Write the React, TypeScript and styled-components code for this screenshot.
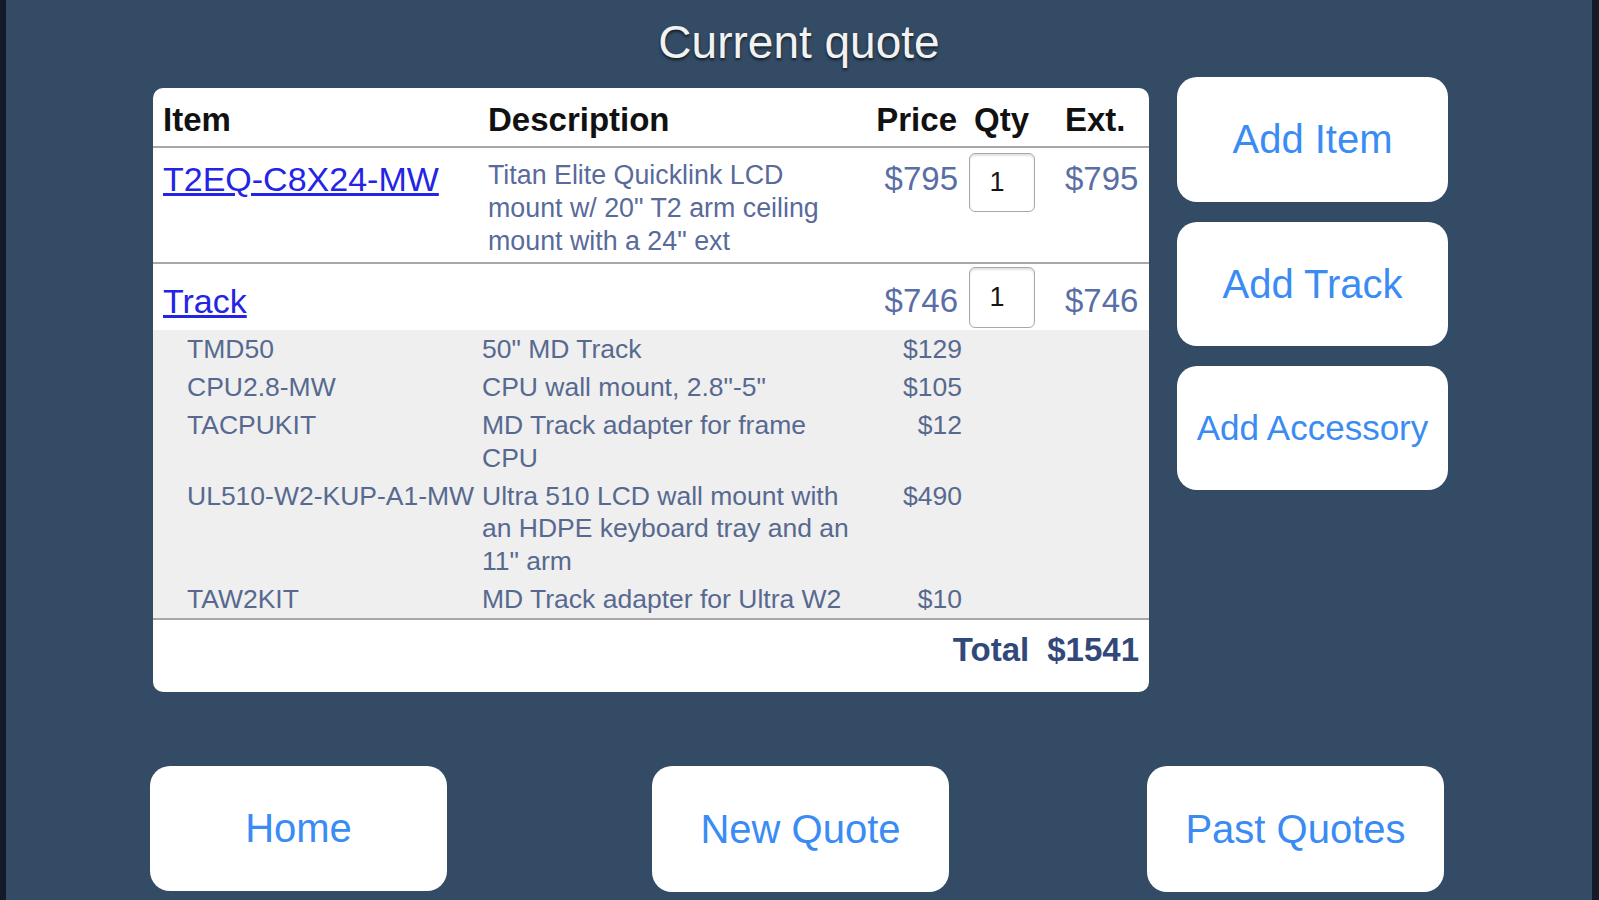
import React from "react";
import styled, { createGlobalStyle } from "styled-components";

const GlobalStyle = createGlobalStyle`
  html, body {
    margin: 0;
    padding: 0;
    background: #344b65;
  }
  * { box-sizing: border-box; }
`;

const Frame = styled.div`
  width: 100%;
  height: 900px;
  background: #344b65;
  border-left: 6px solid #121b27;
  border-right: 7px solid #121b27;
  display: flex;
  flex-direction: column;
  font-family: "Liberation Sans", Arial, sans-serif;
  overflow: hidden;
`;

const Title = styled.h1`
  margin: 15px 0 0;
  font-size: 46px;
  line-height: 54px;
  font-weight: 400;
  color: #f2f2f2;
  text-align: center;
  text-shadow: 0 2px 3px rgba(0, 0, 0, 0.65);
`;

const Main = styled.div`
  display: flex;
  align-items: flex-start;
  gap: 28px;
  margin-top: 8px;
  padding-left: 147px;
`;

const Card = styled.div`
  width: 996px;
  margin-top: 11px;
  background: #ffffff;
  border-radius: 10px;
  overflow: hidden;
`;

const cols = "325px 355px 116px 85px 1fr";

const HeaderRow = styled.div`
  display: grid;
  grid-template-columns: ${cols};
  padding: 0 10px;
  height: 60px;
  border-bottom: 2px solid #a8a8a8;
`;

const HeadCell = styled.div<{ $align?: "left" | "right" | "center"; $pl?: number }>`
  padding-top: 12px;
  font-size: 33px;
  line-height: 40px;
  font-weight: 700;
  color: #111111;
  text-align: ${(p) => p.$align || "left"};
  padding-left: ${(p) => p.$pl || 0}px;
  padding-right: ${(p) => (p.$align === "right" ? 2 : 0)}px;
  white-space: nowrap;
`;

const ItemRow = styled.div<{ $h: number; $line?: boolean }>`
  display: grid;
  grid-template-columns: ${cols};
  align-items: start;
  padding: 0 10px;
  height: ${(p) => p.$h}px;
  border-bottom: ${(p) => (p.$line ? "2px solid #a8a8a8" : "none")};
`;

const ItemLink = styled.a<{ $pt: number }>`
  display: block;
  padding-top: ${(p) => p.$pt}px;
  font-size: 34px;
  line-height: 40px;
  color: #2424e4;
  text-decoration: underline;
  text-underline-offset: 2px;
  white-space: nowrap;
`;

const Desc = styled.div`
  padding-top: 11px;
  font-size: 26.8px;
  line-height: 33px;
  color: #596a9b;
`;

const Money = styled.div<{ $pt: number; $align?: "left" | "right"; $pl?: number }>`
  padding-top: ${(p) => p.$pt}px;
  padding-left: ${(p) => p.$pl || 0}px;
  padding-right: ${(p) => (p.$align === "right" ? 1 : 0)}px;
  font-size: 33px;
  line-height: 40px;
  color: #5a6ea6;
  text-align: ${(p) => p.$align || "left"};
  white-space: nowrap;
`;

const QtyCell = styled.div`
  display: flex;
  justify-content: center;
`;

const QtyBox = styled.input<{ $mt: number; $h: number }>`
  margin-top: ${(p) => p.$mt}px;
  width: 66px;
  height: ${(p) => p.$h}px;
  border: 1.5px solid #a9a9a9;
  border-radius: 6px;
  background: #ffffff;
  padding: 0 0 0 20px;
  font-family: "Liberation Sans", Arial, sans-serif;
  font-size: 27px;
  color: #151515;
  box-shadow: inset 0 2px 2px rgba(0, 0, 0, 0.12);
  outline: none;
`;

const SubList = styled.div`
  background: #efefef;
  padding: 0 0 0 34px;
  border-bottom: 2px solid #a8a8a8;
`;

const SubRow = styled.div`
  display: grid;
  grid-template-columns: 295px 380px 100px;
  align-items: start;
  padding: 3px 0 2.5px;
  font-size: 26.5px;
  line-height: 32.5px;
  color: #57698f;
`;

const SubCell = styled.div<{ $align?: "left" | "right" }>`
  text-align: ${(p) => p.$align || "left"};
  white-space: ${(p) => (p.$align === "right" ? "nowrap" : "normal")};
`;

const SubCode = styled.div`
  white-space: nowrap;
`;

const Footer = styled.div`
  height: 72px;
  display: flex;
  justify-content: flex-end;
  gap: 18px;
  padding: 10px 10px 0 0;
  font-size: 33px;
  line-height: 40px;
  font-weight: 700;
  color: #33487a;
`;

const Side = styled.div`
  display: flex;
  flex-direction: column;
  gap: 20px;
  width: 271px;
`;

const ActionButton = styled.button<{ $w?: number; $size?: number }>`
  width: ${(p) => p.$w || 271}px;
  height: 124px;
  border: none;
  border-radius: 20px;
  background: #ffffff;
  color: #3a8cf4;
  font-family: "Liberation Sans", Arial, sans-serif;
  font-size: ${(p) => p.$size || 40}px;
  font-weight: 400;
  padding: 0;
  cursor: pointer;
  white-space: nowrap;
`;

const Bottom = styled.div`
  margin-top: auto;
  display: grid;
  grid-template-columns: 297px 1fr 297px 1fr 297px;
  padding: 0 148px 8px 144px;
`;

const Spacer = styled.div<{ $w: number }>`
  min-width: ${(p) => p.$w}px;
`;

type Sub = { code: string; desc: string; price: string };

const subs: Sub[] = [
  { code: "TMD50", desc: "50\" MD Track", price: "$129" },
  { code: "CPU2.8-MW", desc: "CPU wall mount, 2.8\"-5\"", price: "$105" },
  { code: "TACPUKIT", desc: "MD Track adapter for frame CPU", price: "$12" },
  {
    code: "UL510-W2-KUP-A1-MW",
    desc: "Ultra 510 LCD wall mount with an HDPE keyboard tray and an 11\" arm",
    price: "$490",
  },
  { code: "TAW2KIT", desc: "MD Track adapter for Ultra W2", price: "$10" },
];

export default function App() {
  return (
    <>
      <GlobalStyle />
      <Frame>
        <Title>Current quote</Title>
        <Main>
          <Card>
            <HeaderRow>
              <HeadCell>Item</HeadCell>
              <HeadCell>Description</HeadCell>
              <HeadCell $align="right">Price</HeadCell>
              <HeadCell $align="center">Qty</HeadCell>
              <HeadCell $pl={21}>Ext.</HeadCell>
            </HeaderRow>

            <ItemRow $h={116} $line>
              <ItemLink href="#" $pt={11}>T2EQ-C8X24-MW</ItemLink>
              <Desc>Titan Elite Quicklink LCD mount w/ 20" T2 arm ceiling mount with a 24" ext</Desc>
              <Money $pt={11} $align="right">$795</Money>
              <QtyCell>
                <QtyBox $mt={5} $h={59} defaultValue="1" readOnly />
              </QtyCell>
              <Money $pt={11} $pl={21}>$795</Money>
            </ItemRow>

            <ItemRow $h={66}>
              <ItemLink href="#" $pt={17}>Track</ItemLink>
              <div />
              <Money $pt={17} $align="right">$746</Money>
              <QtyCell>
                <QtyBox $mt={3} $h={61} defaultValue="1" readOnly />
              </QtyCell>
              <Money $pt={17} $pl={21}>$746</Money>
            </ItemRow>

            <SubList>
              {subs.map((s) => (
                <SubRow key={s.code}>
                  <SubCode>{s.code}</SubCode>
                  <SubCell>{s.desc}</SubCell>
                  <SubCell $align="right">{s.price}</SubCell>
                </SubRow>
              ))}
            </SubList>

            <Footer>
              <span>Total</span>
              <span>$1541</span>
            </Footer>
          </Card>

          <Side>
            <ActionButton style={{ height: 125 }}>Add Item</ActionButton>
            <ActionButton>Add Track</ActionButton>
            <ActionButton $size={35}>Add Accessory</ActionButton>
          </Side>
        </Main>

        <Bottom>
          <ActionButton $w={297} style={{ height: 125 }}>Home</ActionButton>
          <Spacer $w={205} />
          <ActionButton $w={297} style={{ height: 126 }}>New Quote</ActionButton>
          <Spacer $w={198} />
          <ActionButton $w={297} style={{ height: 126 }}>Past Quotes</ActionButton>
        </Bottom>
      </Frame>
    </>
  );
}
